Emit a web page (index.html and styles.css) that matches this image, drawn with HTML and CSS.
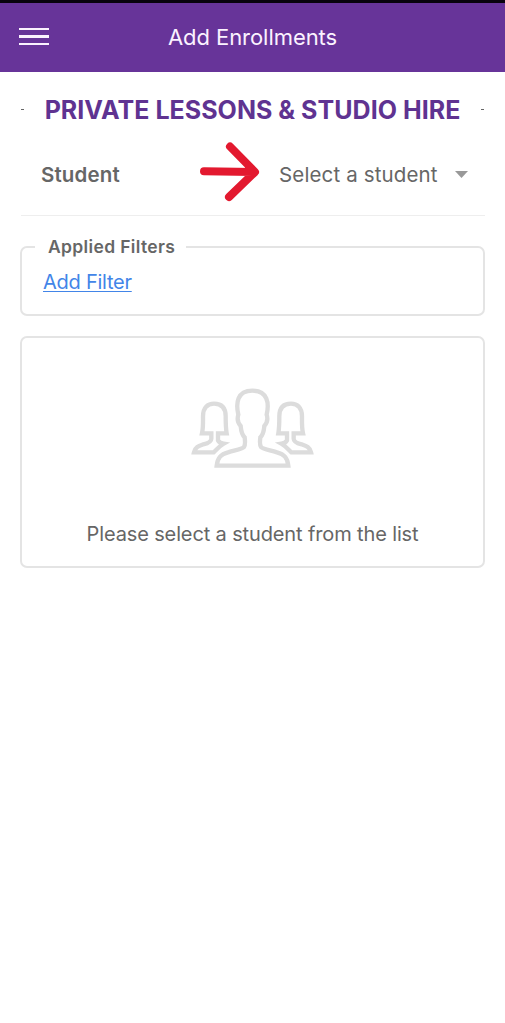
FILE: index.html
```html
<!DOCTYPE html>
<html lang="en">
<head>
<meta charset="utf-8">
<title>Add Enrollments</title>
<link rel="stylesheet" href="styles.css">
</head>
<body>
<header class="topbar">
  <button class="menu" aria-label="Menu"><span></span><span></span><span></span></button>
  <h1 class="topbar-title">Add Enrollments</h1>
</header>
<main class="content">
  <div class="heading"><i class="dash"></i><h2 class="heading-text">PRIVATE LESSONS &amp; STUDIO HIRE</h2><i class="dash"></i></div>
  <div class="student">
    <span class="student-label">Student</span>
    <svg class="arrow" width="62" height="62" viewBox="0 0 62 62"><path d="M5 31.2L54 32M31 6.500L56 32L30 57" /></svg>
    <span class="select-text">Select a student</span>
    <svg class="caret" width="13" height="7" viewBox="0 0 13 7"><path d="M0 0H13L6.500 7Z"/></svg>
  </div>
  <fieldset class="filters">
    <legend class="legend">Applied Filters</legend>
    <a class="add" href="#">Add Filter</a>
  </fieldset>
  <section class="empty">
    <svg class="people" width="124" height="81" viewBox="60 55 372 243">
      <g id="side"><path d="M124 191H96C100 174 99 158 99 140C99 113 113 102 132 102C153 102 167 113 167 140C167 158 167 174 170 191H144V212C148 219 154 221 161 222C147 230 140 240 131 248H72C76 232 86 229 100 224C116 220 124 216 124 207Z"/></g>
      <use href="#side" transform="matrix(-1 0 0 1 495 0)"/>
      <path d="M140 288C143 263 153 254 174 248C196 241 214 240 222 232C227 225 225 211 224 203C215 195 213 181 212 169C204 160 201 147 205 135C197 101 201 63 247 63C293 63 298 101 290 135C294 147 291 160 283 169C282 181 280 195 271 203C270 211 268 225 273 232C281 240 299 241 321 248C342 254 352 263 355 288Z"/>
    </svg>
    <p class="empty-text">Please select a student from the list</p>
  </section>
</main>
</body>
</html>
```

FILE: styles.css
```css
* { box-sizing: border-box; }
body { margin: 0; background: #fff; color: #666; font-family: Inter, sans-serif; font-size: 20.5px; }
.topbar { height: 72px; border-top: 3px solid #08030d; background: #673499; color: #fbf2ff; display: grid; grid-template-columns: 49px 1fr 49px; align-items: center; padding-bottom: 2px; }
.menu { border: 0; padding: 0 0 0 19px; background: none; width: 49px; display: flex; flex-direction: column; gap: 5px; }
.menu span { height: 2.500px; width: 30px; background: #fbf2ff; }
.topbar-title { margin: 0; font-size: 22px; font-weight: 400; text-align: center; line-height: 28px; letter-spacing: -0.05px; }
.content { padding: 0 20px; }
.heading { height: 75px; display: flex; align-items: center; justify-content: space-between; padding: 0 1px; }
.heading-text { margin: 0; color: #5f3391; font-size: 25px; font-weight: 700; white-space: nowrap; letter-spacing: 0.03px; }
.dash { width: 3px; height: 1px; background: #666; }
.student { height: 69px; border-bottom: 1px solid #eee; margin-left: 1px; display: flex; align-items: center; padding: 0 17px 14px 20px; }
.student-label { font-weight: 600; width: 158px; letter-spacing: 0.15px; }
.arrow { flex: none; margin-top: -7px; fill: none; stroke: #e3192f; stroke-width: 8; stroke-linecap: round; stroke-linejoin: round; }
.select-text { margin-left: 18px; white-space: nowrap; letter-spacing: 0.14px; }
.caret { margin-left: auto; fill: #999; }
.filters { margin: 20px 0 0; padding: 11px 20px 0 21px; height: 80px; border: 2px solid #e4e4e4; border-radius: 7px; }
.legend { padding: 0 11px 0 13px; margin-left: -8px; font-size: 17.500px; font-weight: 600; line-height: 22px; letter-spacing: 0.35px; }
.add { color: #4285e8; font-size: 20px; letter-spacing: -0.25px; text-decoration-thickness: 1px; text-underline-offset: 2px; }
.empty { margin-top: 20px; height: 232px; border: 2px solid #e4e4e4; border-radius: 7px; display: flex; flex-direction: column; align-items: center; padding-top: 50px; }
.people { fill: none; stroke: #dcdcdc; stroke-width: 13; overflow: visible; margin-right: 2px; }
.empty-text { margin: 52px 0 0; font-size: 20px; line-height: 26px; letter-spacing: -0.13px; white-space: nowrap; }
```
